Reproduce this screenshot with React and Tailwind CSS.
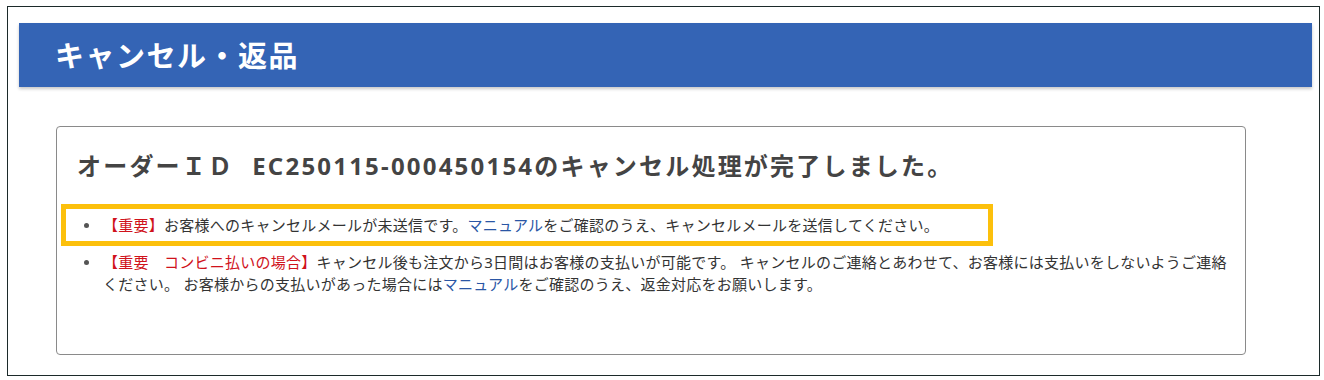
export default function App() {
  const jp = { fontFamily: '"Noto Sans", "Noto Sans CJK JP", sans-serif' };
  return (
    <div className="w-[1324px] h-[380px] bg-white pt-[6px] pl-[7px]" style={jp}>
      <div className="w-[1313px] h-[370px] border border-[#1c2a2a] bg-white flex flex-col">
        <div className="mt-[16px] ml-[11px] mr-[7px] h-[64px] bg-[#3464b5] shadow-[0_2px_3px_rgba(0,0,0,0.22)] flex items-center pl-[36px]">
          <h1 className="text-white font-bold text-[29px] leading-none tracking-[1.5px]">キャンセル・返品</h1>
        </div>
        <div className="mt-[39px] ml-[48px] w-[1190px] h-[229px] border border-[#8a8a8a] rounded-[4px] flex flex-col">
          <h2 className="pt-[22px] pl-[20px] text-[24px] leading-[34px] font-bold text-[#444] tracking-[2.2px] whitespace-nowrap">
            オーダーＩＤ<span className="inline-block w-[18px]"></span>EC250115-000450154のキャンセル処理が完了しました。
          </h2>
          <ul className="mt-[21px] ml-[4px] text-[15px] leading-[22px] text-[#333] tracking-[0.25px]">
            <li className="w-[932px] border-[5px] border-[#fcc00c] flex pt-[5px] pb-[5px]">
              <span className="w-[37px] shrink-0 flex pl-[18px] pt-[9px]">
                <span className="w-[5px] h-[5px] rounded-full bg-[#555]"></span>
              </span>
              <span className="whitespace-nowrap">
                <span className="text-[#d0121b]">【重要】</span>お客様へのキャンセルメールが未送信です。<span className="text-[#2a56a5]">マニュアル</span>をご確認のうえ、キャンセルメールを送信してください。
              </span>
            </li>
            <li className="flex pt-[5px] pl-[5px]">
              <span className="w-[37px] shrink-0 flex pl-[18px] pt-[9px]">
                <span className="w-[5px] h-[5px] rounded-full bg-[#555]"></span>
              </span>
              <span className="whitespace-nowrap">
                <span className="text-[#d0121b]">【重要　コンビニ払いの場合】</span>キャンセル後も注文から3日間はお客様の支払いが可能です。 キャンセルのご連絡とあわせて、お客様には支払いをしないようご連絡
                <br />
                ください。 お客様からの支払いがあった場合には<span className="text-[#2a56a5]">マニュアル</span>をご確認のうえ、返金対応をお願いします。
              </span>
            </li>
          </ul>
        </div>
      </div>
    </div>
  );
}
